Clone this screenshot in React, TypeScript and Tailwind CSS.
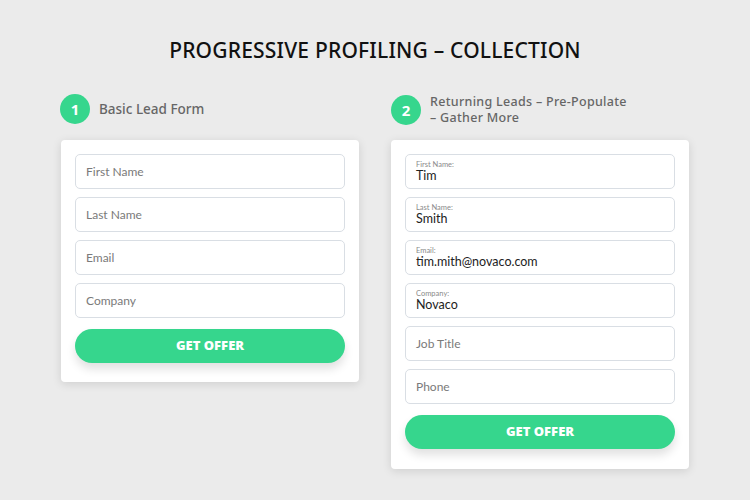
import React from "react";

const green = "bg-[#36d68d]";

function Plain({ label }: { label: string }) {
  return (
    <div className="h-[35px] rounded-[5px] border border-[#d9dee4] bg-white flex items-center pl-[10px] text-[12px] text-[#7a7a7a] font-['Lato',sans-serif]">
      {label}
    </div>
  );
}

function Filled({ label, value }: { label: string; value: string }) {
  return (
    <div className="h-[35px] rounded-[5px] border border-[#d9dee4] bg-white flex flex-col justify-center pl-[10px] font-['Lato',sans-serif]">
      <div className="text-[7.5px] leading-[9px] text-[#8a8a8a]">{label}</div>
      <div className="text-[12.5px] leading-[14px] text-[#222]">{value}</div>
    </div>
  );
}

function Button() {
  return (
    <div className={`h-[34px] rounded-full ${green} flex items-center justify-center text-white font-extrabold text-[13px] font-['Open_Sans',sans-serif] shadow-[0_6px_10px_rgba(0,0,0,0.12)]`}>
      GET OFFER
    </div>
  );
}

function Badge({ n }: { n: string }) {
  return (
    <div className={`w-[30px] h-[30px] rounded-full ${green} flex items-center justify-center text-white font-bold text-[15px] font-['Noto_Sans',sans-serif] shrink-0`}>
      {n}
    </div>
  );
}

export default function App() {
  return (
    <div className="w-[750px] h-[500px] bg-[#ebebeb] overflow-hidden font-['Noto_Sans',sans-serif]">
      <div className="pt-[36px] text-center text-[21px] leading-[28px] text-[#111] font-medium tracking-[0.2px]">
        PROGRESSIVE PROFILING – COLLECTION
      </div>
      <div className="flex justify-center gap-[32px] mt-[30px]">
        <div className="w-[298px]">
          <div className="h-[46px] flex items-start gap-[9px] -ml-[1px]">
            <Badge n="1" />
            <div className="text-[13.5px] leading-[16px] text-[#666] font-medium pt-[7px]">Basic Lead Form</div>
          </div>
          <div className="bg-white rounded-[4px] shadow-[0_2px_10px_rgba(0,0,0,0.12)] px-[14px] pt-[14px] pb-[19px]">
            <div className="flex flex-col gap-[8px]">
              <Plain label="First Name" />
              <Plain label="Last Name" />
              <Plain label="Email" />
              <Plain label="Company" />
            </div>
            <div className="mt-[11px]"><Button /></div>
          </div>
        </div>
        <div className="w-[298px]">
          <div className="h-[46px] flex items-start gap-[9px] pt-[1px]">
            <Badge n="2" />
            <div className="flex flex-col text-[12.5px] leading-[16px] tracking-[0.3px] text-[#666] font-medium -mt-[1px]">
              <span>Returning Leads – Pre-Populate</span>
              <span>– Gather More</span>
            </div>
          </div>
          <div className="bg-white rounded-[4px] shadow-[0_2px_10px_rgba(0,0,0,0.12)] px-[14px] pt-[14px] pb-[20px]">
            <div className="flex flex-col gap-[8px]">
              <Filled label="First Name:" value="Tim" />
              <Filled label="Last Name:" value="Smith" />
              <Filled label="Email:" value="tim.mith@novaco.com" />
              <Filled label="Company:" value="Novaco" />
              <Plain label="Job Title" />
              <Plain label="Phone" />
            </div>
            <div className="mt-[11px]"><Button /></div>
          </div>
        </div>
      </div>
    </div>
  );
}
